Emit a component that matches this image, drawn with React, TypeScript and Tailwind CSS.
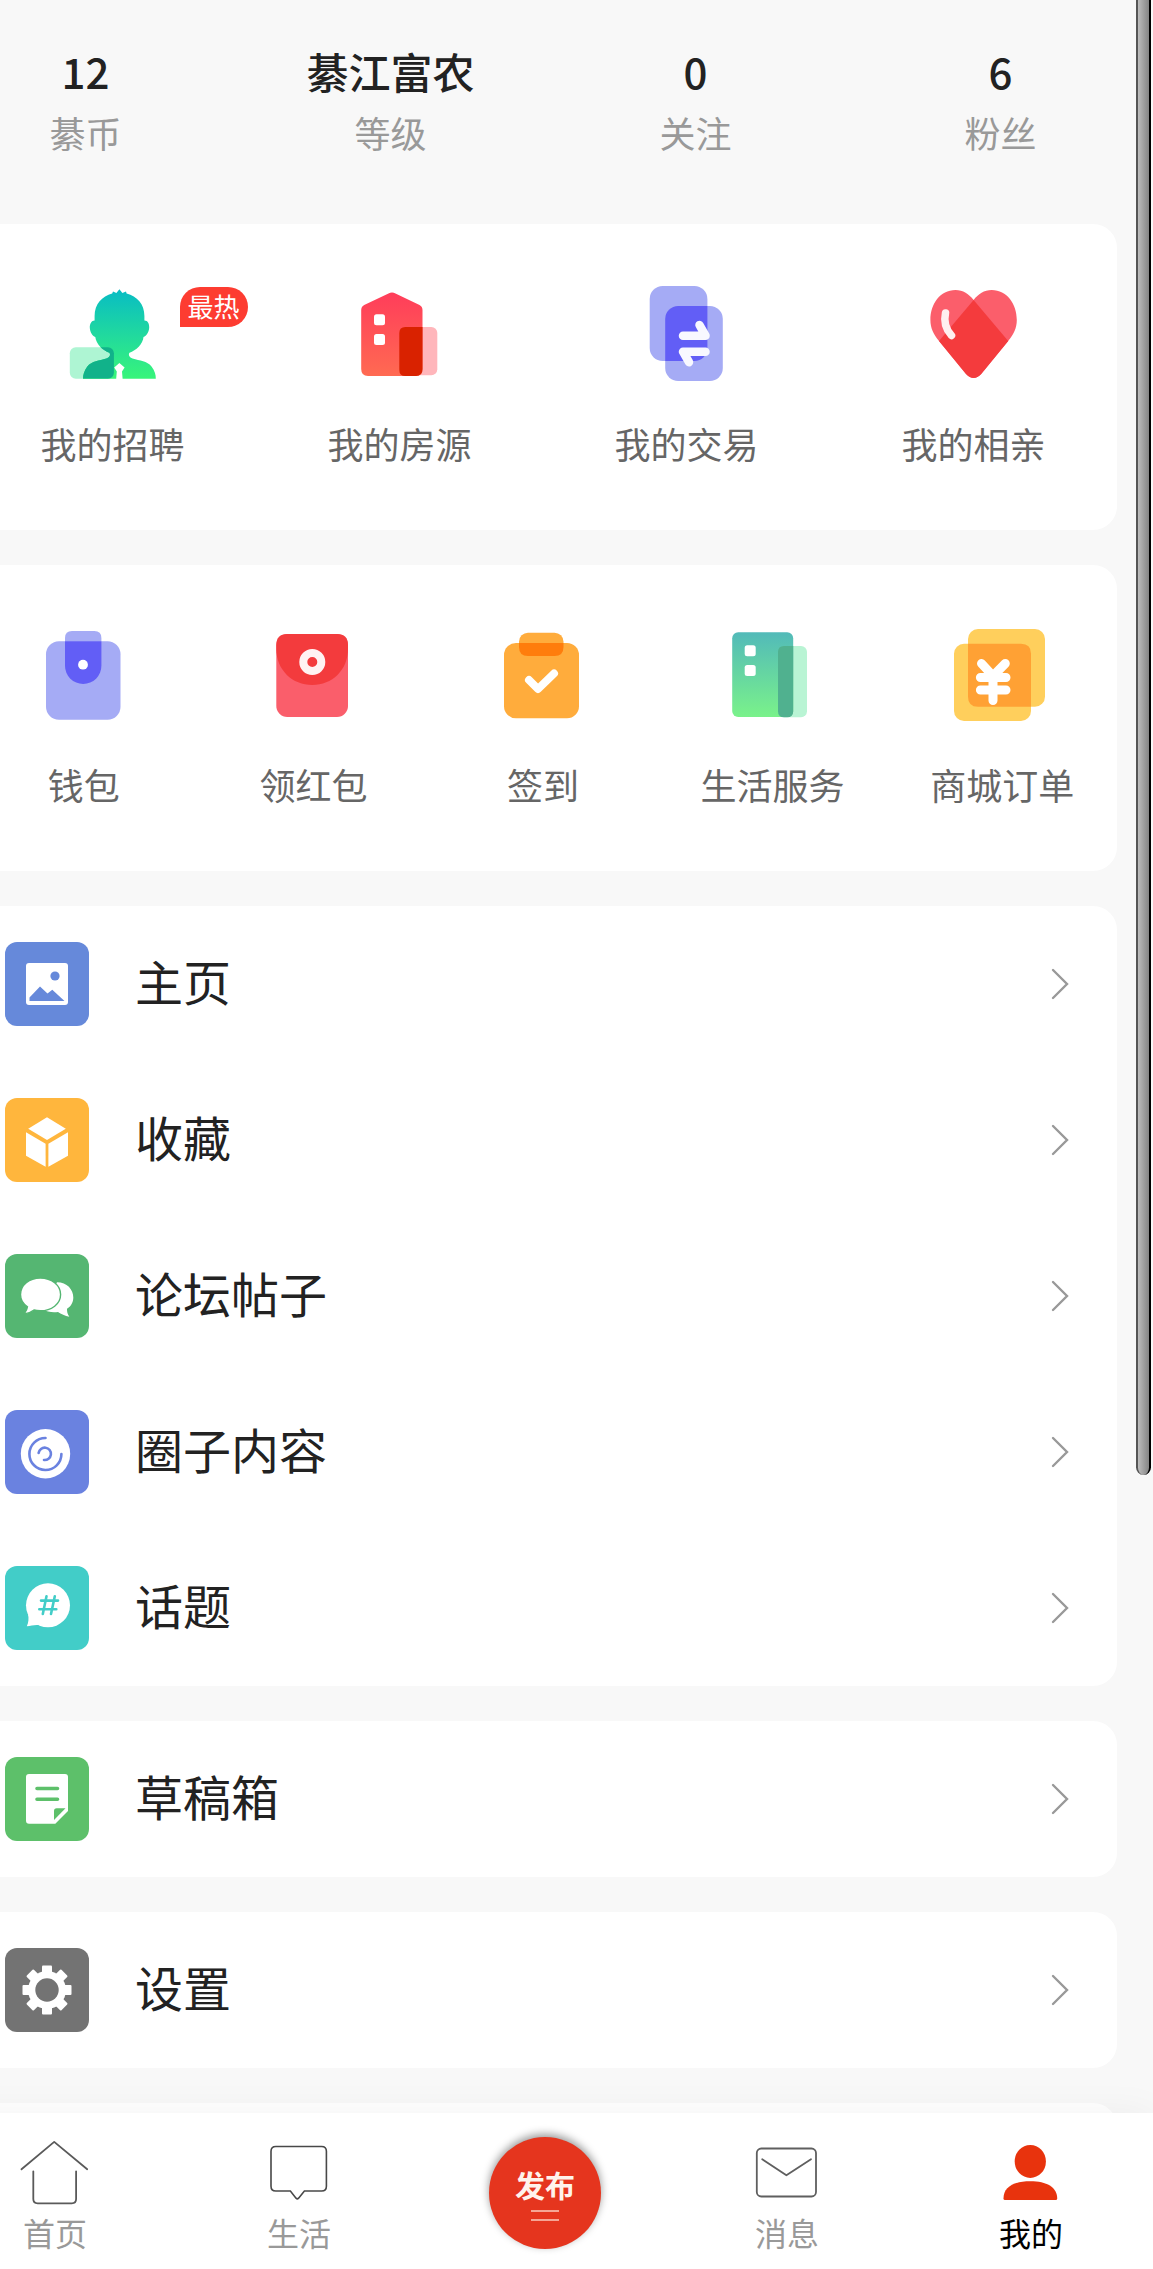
// src/App.tsx

import React from "react";

const stats = [
  { value: "12", label: "綦币" },
  { value: "綦江富农", label: "等级" },
  { value: "0", label: "关注" },
  { value: "6", label: "粉丝" },
];

const PersonIcon = () => (
  <svg viewBox="0 0 108 108" className="size-27" aria-hidden="true">
    <defs>
      <linearGradient id="person" x1="0" y1="0" x2="0" y2="1">
        <stop offset="0" stopColor="#08bcc4" />
        <stop offset="1" stopColor="#38f57a" />
      </linearGradient>
      <path
        id="personShape"
        d="M60.4 9.3 L63.4 13 L67 11.6 L67.6 13.4 C78 16 85.4 24 85.4 36 L85.4 40.5 C89 40.5 90.4 44 90.2 47.5 C90 52 87.5 56 84.5 57 C84 64 77 70.5 70.5 72.8 C69 75 70.5 77.5 73.5 78.6 C81 81 88 81 92.5 86.5 C96 91 96.8 95 96.8 98.7 L63.6 98.7 L63 91.5 L65.6 87.6 L60.4 83 L55.2 87.6 L57.8 91.5 L57.2 98.7 L24 98.7 C24 95 25 91 28.3 86.5 C33 81 40 81 47.3 78.6 C50.5 77.5 52 75 50.3 72.8 C44 70.5 37 64 36.3 57 C33.3 56 31 52 30.8 47.5 C30.7 44 32.5 40.5 35.6 40.5 L35.6 36 C35.6 24 43 16 53.2 13.4 L54 11.6 L57.4 13 Z"
      />
      <clipPath id="personClip">
        <use href="#personShape" />
      </clipPath>
    </defs>
    <rect x="10.8" y="67.3" width="44.1" height="31.4" rx="6" fill="#aef5d3" />
    <use href="#personShape" fill="url(#person)" />
    <rect
      x="10.8"
      y="67.3"
      width="44.1"
      height="31.4"
      rx="6"
      fill="#11b28a"
      clipPath="url(#personClip)"
    />
  </svg>
);

const HouseIcon = () => (
  <svg viewBox="1 0 108 108" className="size-27" aria-hidden="true">
    <defs>
      <linearGradient id="house" x1="0" y1="0" x2="0" y2="1">
        <stop offset="0" stopColor="#ff3d5a" />
        <stop offset="1" stopColor="#ff6a52" />
      </linearGradient>
    </defs>
    <rect x="54.3" y="47" width="38" height="48.3" rx="6" fill="#ffb6bb" />
    <path
      d="M43.5 13.6 Q47 11.4 50.5 13.6 L74.5 25 Q77.5 26.7 77.5 30 V89 Q77.5 96 71 96 H23 Q16.2 96 16.2 89 V30 Q16.2 26.7 19.2 25 Z"
      fill="url(#house)"
    />
    <path
      d="M60.3 47 H77.5 V89 Q77.5 96 71 96 H60.3 Q54.3 96 54.3 90 V53 Q54.3 47 60.3 47 Z"
      fill="#d92200"
    />
    <rect x="29" y="34.3" width="11" height="11" rx="2.5" fill="#fff" />
    <rect x="29" y="54" width="11" height="11" rx="2.5" fill="#fff" />
  </svg>
);

const TradeIcon = () => (
  <svg viewBox="1 0 108 108" className="size-27" aria-hidden="true">
    <defs>
      <clipPath id="tradeClip">
        <rect x="17.7" y="6" width="57.7" height="75" rx="13" />
      </clipPath>
    </defs>
    <rect x="17.7" y="6" width="57.7" height="75" rx="13" fill="#a5abf5" />
    <rect x="33.2" y="26" width="57.6" height="75" rx="13" fill="#a5abf5" />
    <rect
      x="33.2"
      y="26"
      width="57.6"
      height="75"
      rx="13"
      fill="#625ef6"
      clipPath="url(#tradeClip)"
    />
    <g
      fill="none"
      stroke="#f8f8ff"
      strokeWidth="8.5"
      strokeLinecap="round"
      strokeLinejoin="round"
    >
      <path d="M51 55.7 H73.5 L67.5 45" />
      <path d="M73.5 71.7 H51 L57 82.2" />
    </g>
  </svg>
);

const HeartIcon = () => (
  <svg viewBox="1 0 108 108" className="size-27" aria-hidden="true">
    <path
      d="M54.6 20 C50 14 44 10 36.5 10 C21 10 11.4 24 11.4 40 C11.4 48 14.5 54.5 20 61 L47 94 Q54.6 102 62.2 94 L89.2 61 C94.7 54.5 97.8 48 97.8 40 C97.8 24 88 10 72.7 10 C65.2 10 59.2 14 54.6 20 Z"
      fill="#fb5e6b"
    />
    <path
      d="M54.6 20 L89.2 61 L62.2 94 Q54.6 102 47 94 L20 61 Z"
      fill="#f43b3d"
    />
    <path
      d="M26.5 33 C24.5 42 27.5 50 32.5 55.5"
      fill="none"
      stroke="#fff0f0"
      strokeWidth="7.5"
      strokeLinecap="round"
    />
  </svg>
);

const WalletIcon = () => (
  <svg viewBox="1 0 108 108" className="size-27" aria-hidden="true">
    <rect x="17" y="20.3" width="74.5" height="78.4" rx="13" fill="#a5abf5" />
    <path d="M36 20.3 V17 Q36 10 43 10 H65.4 Q72.4 10 72.4 17 V20.3 Z" fill="#a5abf5" />
    <path d="M36 20.3 H72.4 V44.8 A18.2 18.2 0 0 1 36 44.8 Z" fill="#625ef6" />
    <circle cx="54" cy="43.7" r="4.9" fill="#fff" />
  </svg>
);

const RedPacketIcon = () => (
  <svg viewBox="0 0 108 108" className="size-27" aria-hidden="true">
    <rect x="17.3" y="13" width="71.7" height="83" rx="11" fill="#fa5e6b" />
    <path
      d="M28.3 13 H78 Q89 13 89 24 V28 C89 49 73 64 53.2 64 C33.4 64 17.3 49 17.3 28 V24 Q17.3 13 28.3 13 Z"
      fill="#f33b3d"
    />
    <circle cx="53.3" cy="41" r="9" fill="none" stroke="#fff3f3" strokeWidth="8" />
  </svg>
);

const CheckInIcon = () => (
  <svg viewBox="0 0 108 108" className="size-27" aria-hidden="true">
    <rect x="30" y="11.7" width="44.5" height="23.3" rx="9" fill="#ffac3c" />
    <rect x="15" y="22" width="75" height="75.3" rx="12" fill="#ffac3c" />
    <path d="M30 22 H74.5 V26 Q74.5 35 65.5 35 H39 Q30 35 30 26 Z" fill="#ff7d0c" />
    <path
      d="M40 59 L49 68 L65 52.5"
      fill="none"
      stroke="#fff"
      strokeWidth="8"
      strokeLinecap="round"
      strokeLinejoin="round"
    />
  </svg>
);

const ServiceIcon = () => (
  <svg viewBox="1 0 108 108" className="size-27" aria-hidden="true">
    <defs>
      <linearGradient id="service" x1="0" y1="0" x2="0" y2="1">
        <stop offset="0" stopColor="#52bab9" />
        <stop offset="1" stopColor="#7af28a" />
      </linearGradient>
    </defs>
    <rect x="60" y="25" width="29" height="71.3" rx="6" fill="#b9f4d4" />
    <rect x="14.2" y="11.3" width="61" height="84.7" rx="6" fill="url(#service)" />
    <path
      d="M66 25 H75.2 V90.3 Q75.2 96.3 69.2 96.3 H66 Q60 96.3 60 90.3 V31 Q60 25 66 25 Z"
      fill="#50b18f"
    />
    <rect x="26.7" y="24.3" width="11" height="11" rx="2.5" fill="#fff" />
    <rect x="26.7" y="44" width="11" height="11" rx="2.5" fill="#fff" />
  </svg>
);

const OrderIcon = () => (
  <svg viewBox="0 0 108 108" className="size-27" aria-hidden="true">
    <rect x="20" y="8" width="77" height="77.7" rx="10" fill="#ffcf5c" />
    <rect x="6" y="22.7" width="77" height="77.3" rx="10" fill="#ffcf5c" />
    <path
      d="M20 22.7 H73 Q83 22.7 83 32.7 V85.7 H30 Q20 85.7 20 75.7 Z"
      fill="#ffa134"
    />
    <g
      fill="none"
      stroke="#fff"
      strokeWidth="9"
      strokeLinecap="round"
      strokeLinejoin="round"
    >
      <path d="M33.5 42.5 L45 55 L57.3 42.5" />
      <path d="M32.4 56.5 H58 M32.4 69 H58 M45 56 V79.5" />
    </g>
  </svg>
);

const services = [
  { label: "我的招聘", icon: <PersonIcon />, badge: "最热" },
  { label: "我的房源", icon: <HouseIcon /> },
  { label: "我的交易", icon: <TradeIcon /> },
  { label: "我的相亲", icon: <HeartIcon /> },
];

const tools = [
  { label: "钱包", icon: <WalletIcon /> },
  { label: "领红包", icon: <RedPacketIcon /> },
  { label: "签到", icon: <CheckInIcon /> },
  { label: "生活服务", icon: <ServiceIcon /> },
  { label: "商城订单", icon: <OrderIcon /> },
];

const menuGroups = [
  [
    {
      label: "主页",
      color: "bg-[#6689da]",
      icon: (
        <>
          <rect x="21" y="21" width="42" height="42" rx="3" fill="#fff" />
          <circle cx="50" cy="34" r="4.6" fill="#6689da" />
          <path d="M24.5 59 V55.5 L35 44.5 L42.5 51.5 L47.3 47.7 L59.5 59 Z" fill="#6689da" />
        </>
      ),
    },
    {
      label: "收藏",
      color: "bg-[#ffb63d]",
      icon: (
        <g fill="#fff">
          <path d="M42 19.3 L60.8 30.7 L42 41.9 L23.2 30.7 Z" />
          <path d="M21 34.3 L40.6 45.7 V68.7 L21 57.7 Z" />
          <path d="M63 34.3 L43.4 45.7 V68.7 L63 57.7 Z" />
        </g>
      ),
    },
    {
      label: "论坛帖子",
      color: "bg-[#55b672]",
      icon: (
        <>
          <path
            d="M52 28.3 C62 28.3 68.3 35.5 68.3 43.5 C68.3 48.3 66 52.3 62 54.8 C62 57.8 62.5 60.2 64.3 62.8 C60 62 56 60 53 58 C48 58.8 42 58 38 55.5 Z"
            fill="#fff"
          />
          <path
            d="M35.3 24 C46.5 24 55.6 31 55.6 40.5 C55.6 50 46.5 56.8 35.3 56.8 C33 56.8 31 56.6 29 56 C26.5 58 23 59.5 19 60 C21 57.5 22.3 55 22.5 52.8 C18.3 50 15.5 45.5 15.5 40.5 C15.5 31 24.3 24 35.3 24 Z"
            fill="#fff"
            stroke="#55b672"
            strokeWidth="1.4"
          />
        </>
      ),
    },
    {
      label: "圈子内容",
      color: "bg-[#6a82e0]",
      icon: (
        <>
          <circle cx="40.5" cy="43.7" r="24.7" fill="#fff" />
          <g fill="none" stroke="#6a82e0" strokeWidth="2.6" strokeLinecap="round">
            <path d="M40.5 28 A16 16 0 1 0 56.4 44" />
            <path d="M33.6 43 A6.2 6.2 0 1 1 39 50" />
          </g>
        </>
      ),
    },
    {
      label: "话题",
      color: "bg-[#42cdc8]",
      icon: (
        <>
          <circle cx="43" cy="39.3" r="22" fill="#fff" />
          <path d="M23 48 C24 53 23.5 56.5 21.8 60.3 C26 59.5 29.5 58.6 34 59 Z" fill="#fff" />
          <path
            d="M36 34.6 H53 M34.3 43.3 H51.3 M41.5 30.3 L37.8 48 M49.8 30.3 L46 48"
            stroke="#42cdc8"
            strokeWidth="2.6"
            strokeLinecap="round"
          />
        </>
      ),
    },
  ],
  [
    {
      label: "草稿箱",
      color: "bg-[#5dc06a]",
      icon: (
        <>
          <path
            d="M24 17 H60 Q63 17 63 20 V54 L50.3 66.7 H24 Q21 66.7 21 63.7 V20 Q21 17 24 17 Z"
            fill="#fff"
          />
          <path d="M49 63 V54 Q49 51.3 51.7 51.3 H60.5 Z" fill="#5dc06a" />
          <path
            d="M32 31.5 H52.5 M32 42.3 H52.5"
            stroke="#5dc06a"
            strokeWidth="3.6"
            strokeLinecap="round"
          />
        </>
      ),
    },
  ],
  [
    {
      label: "设置",
      color: "bg-[#737373]",
      icon: (
        <>
          <g fill="#fff">
            <circle cx="42" cy="42" r="19" />
            <rect x="37" y="17.5" width="10" height="49" rx="1" />
            <rect x="17.5" y="37" width="49" height="10" rx="1" />
            <rect x="37" y="17.5" width="10" height="49" rx="1" transform="rotate(45 42 42)" />
            <rect x="37" y="17.5" width="10" height="49" rx="1" transform="rotate(-45 42 42)" />
          </g>
          <circle cx="42" cy="42" r="11.7" fill="#737373" />
        </>
      ),
    },
  ],
];

const HomeTab = () => (
  <svg viewBox="0 0 80 72" className="h-18 w-20" aria-hidden="true">
    <g fill="none" stroke="#5a5a5a" strokeWidth="1.8" strokeLinecap="round" strokeLinejoin="round">
      <path d="M6.5 32.3 L39.2 4.9 L72.2 32.3" />
      <path d="M18.3 34.3 V62 Q18.3 66.3 22.6 66.3 H56.8 Q61.1 66.3 61.1 62 V34.3" />
    </g>
  </svg>
);

const LifeTab = () => (
  <svg viewBox="0 0 80 72" className="h-18 w-20" aria-hidden="true">
    <path
      d="M16.8 9.5 H62.6 Q67.4 9.5 67.4 14.3 V49.2 Q67.4 54 62.6 54 H45.4 L39.6 61.2 Q38.3 62.4 37 61.2 L31.4 54 H16.8 Q12 54 12 49.2 V14.3 Q12 9.5 16.8 9.5 Z"
      fill="none"
      stroke="#484848"
      strokeWidth="1.6"
    />
  </svg>
);

const MessageTab = () => (
  <svg viewBox="0 0 80 72" className="h-18 w-20" aria-hidden="true">
    <g fill="none" stroke="#5f5f5f" strokeWidth="1.8" strokeLinecap="round" strokeLinejoin="round">
      <rect x="9.8" y="11.5" width="59.2" height="48" rx="4.5" />
      <path d="M15.2 22.3 L39.4 38.3 L64 22.3" />
    </g>
  </svg>
);

const MineTab = () => (
  <svg viewBox="0 0 80 72" className="h-18 w-20" aria-hidden="true">
    <g fill="#e8330d">
      <ellipse cx="39.3" cy="24.4" rx="15.6" ry="16.5" />
      <path d="M12.5 61.5 C12.5 50 23 44.2 39.3 44.2 C55.6 44.2 66.2 50 66.2 61.5 Q66.2 63 64.6 63 H14 Q12.5 63 12.5 61.5 Z" />
    </g>
  </svg>
);

type Entry = { label: string; icon: React.ReactNode; badge?: string };

const EntryLink = ({ label, icon, badge }: Entry) => (
  <a href="#" className="relative flex flex-col items-center pt-14 pb-[62px]">
    {icon}
    {badge && (
      <span className="absolute top-[63px] left-1/2 ml-[67px] flex h-10 w-17 items-center justify-center rounded-[20px] rounded-bl-none bg-[#fd3c31] pb-0.5 text-[26px] leading-none text-white">
        {badge}
      </span>
    )}
    <span className="mt-[30px] text-4xl leading-[50px] text-[#666]">{label}</span>
  </a>
);

const TabLink = ({ label, icon, active }: Entry & { active?: boolean }) => (
  <a href="#" className="flex flex-col items-center pt-6">
    {icon}
    <span className={active ? "text-[32px] leading-[46px] text-black" : "text-[32px] leading-[46px] text-[#999]"}>
      {label}
    </span>
  </a>
);

const App = () => {
  return (
    <div className="relative flex h-screen flex-col overflow-hidden bg-[#f8f8f8] font-['Noto_Sans_CJK_SC',sans-serif]">
      <main className="-ml-[67px] flex min-h-0 flex-1 flex-col overflow-hidden">
        <section className="grid shrink-0 grid-cols-4 pt-11 pb-[70px]">
          {stats.map((item) => (
            <a href="#" key={item.label} className="flex flex-col items-center gap-3">
              <span className="text-[42px] leading-[54px] font-medium text-[#222]">
                {item.value}
              </span>
              <span className="text-4xl leading-[44px] text-[#999]">{item.label}</span>
            </a>
          ))}
        </section>

        <div className="flex flex-col gap-[35px] px-9">
          <section className="grid grid-cols-4 rounded-3xl bg-white">
            {services.map((item) => (
              <EntryLink key={item.label} {...item} />
            ))}
          </section>

          <section className="grid grid-cols-5 rounded-3xl bg-white">
            {tools.map((item) => (
              <EntryLink key={item.label} {...item} />
            ))}
          </section>

          {menuGroups.map((group) => (
            <nav key={group[0].label} className="rounded-3xl bg-white">
              {group.map((item) => (
                <a
                  href="#"
                  key={item.label}
                  className="flex items-center gap-[46px] py-9 pr-12 pl-9"
                >
                  <span className={`size-21 rounded-xl ${item.color}`}>
                    <svg viewBox="0 0 84 84" className="size-21" aria-hidden="true">
                      {item.icon}
                    </svg>
                  </span>
                  <span className="flex-1 pb-2 text-5xl leading-[72px] text-[#222]">
                    {item.label}
                  </span>
                  <svg viewBox="0 0 18 32" className="h-8 w-[18px]" aria-hidden="true">
                    <path
                      d="M2 2 L16 16 L2 30"
                      fill="none"
                      stroke="#999"
                      strokeWidth="2.4"
                      strokeLinecap="round"
                    />
                  </svg>
                </a>
              ))}
            </nav>
          ))}

          {/* next group, tucked under the tab bar */}
          <section className="h-39 rounded-3xl bg-white" />
        </div>
      </main>

      <nav className="relative -ml-[67px] grid h-39 shrink-0 grid-cols-5 bg-white shadow-[0_0_36px_rgba(0,0,0,0.05)]">
        <TabLink label="首页" icon={<HomeTab />} />
        <TabLink label="生活" icon={<LifeTab />} />
        <div className="flex justify-center pt-6 pl-1">
          <button
            type="button"
            className="flex size-28 flex-col items-center justify-center rounded-full bg-[#e5351e] shadow-[0_-3px_8px_rgba(0,0,0,0.4)]"
          >
            <span className="text-3xl leading-9 font-bold text-[#fff3ec]">发布</span>
            <span className="mt-2 h-[11px] w-7 border-y-2 border-[#f5a595]" />
          </button>
        </div>
        <TabLink label="消息" icon={<MessageTab />} />
        <TabLink label="我的" icon={<MineTab />} active />
      </nav>

      {/* scroll thumb */}
      <div className="absolute top-0 right-0.5 h-[65%] w-[15px] rounded-b-lg border-r-2 border-l-2 border-r-black border-l-[#555] bg-linear-to-r from-[#bdbdbd] to-[#858585]" />
    </div>
  );
};

export default App;
